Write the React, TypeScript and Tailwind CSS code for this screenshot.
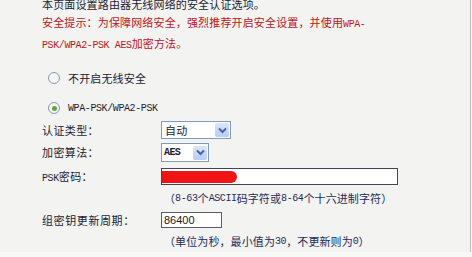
import React from "react";

const cjk = '"Noto Sans CJK SC", "Noto Sans", sans-serif';
const mono = '"Liberation Mono", "Noto Sans CJK SC", monospace';

function M({ children }: { children: React.ReactNode }) {
  return (
    <span className="text-[10px] tracking-[-0.4px]" style={{ fontFamily: mono }}>
      {children}
    </span>
  );
}

function Chevron() {
  return (
    <div className="flex h-[14px] w-[14px] items-center justify-center rounded-[2px] bg-gradient-to-b from-[#dbe6fd] to-[#b7cbf6]">
      <svg width="9" height="7" viewBox="0 0 9 7">
        <path d="M1 1.5 L4.5 5 L8 1.5" fill="none" stroke="#4a64a0" strokeWidth="2" />
      </svg>
    </div>
  );
}

export default function App() {
  return (
    <div
      className="relative h-[257px] w-[472px] overflow-hidden bg-[#f8f8f6] text-[11px] text-[#1c1c34]"
      style={{ fontFamily: cjk }}
    >
      <div className="h-full w-[471px] border-r border-[#bdbdbd] bg-[#f3f3f1] pl-[42px]">
        <p className="mt-[-5px] leading-[18px] tracking-[0.15px]">
          本页面设置路由器无线网络的安全认证选项。
          <br />
          <span className="text-[#c0141c]">
            安全提示：为保障网络安全，强烈推荐开启安全设置，并使用<M>WPA-</M>
            <br />
            <M>PSK/WPA2-PSK AES</M>加密方法。
          </span>
        </p>

        <div className="mt-[13px] flex h-[20px] items-center gap-[8px] pl-[6px]">
          <div className="h-[12px] w-[12px] rounded-full border border-[#8a98a8] bg-[#f6f6f6]" />
          <span className="tracking-[0.15px]">不开启无线安全</span>
        </div>

        <div className="mt-[10px] flex h-[20px] items-center gap-[8px] pl-[6px]">
          <div className="flex h-[12px] w-[12px] items-center justify-center rounded-full border border-[#8a98a8] bg-[#f6f6f6]">
            <div className="h-[5px] w-[5px] rounded-full bg-[#58a83c]" />
          </div>
          <M>WPA-PSK/WPA2-PSK</M>
        </div>

        <div className="mt-[3px] flex h-[18px] items-center">
          <span className="w-[119px] tracking-[0.4px]">认证类型：</span>
          <div className="flex h-[18px] w-[70px] items-center justify-between border border-[#7f9db9] bg-white pl-[3px] pr-[1px]">
            <span className="tracking-[0.3px]">自动</span>
            <Chevron />
          </div>
        </div>

        <div className="mt-[4px] flex h-[19px] items-center">
          <span className="w-[119px] tracking-[0.4px]">加密算法：</span>
          <div className="flex h-[19px] w-[48px] items-center justify-between border border-[#7f9db9] bg-white pl-[2px] pr-[1px]">
            <span className="text-[10px] font-bold tracking-[-0.6px]" style={{ fontFamily: mono }}>
              AES
            </span>
            <Chevron />
          </div>
        </div>

        <div className="mt-[6px] flex h-[17px] items-center">
          <span className="w-[119px]">
            <M>PSK</M>
            <span className="tracking-[0.4px]">密码：</span>
          </span>
          <div className="relative h-[17px] w-[237px] border border-[#3c4658] bg-white">
            <div className="absolute left-[0px] top-[2px] h-[12px] w-[75px] rounded-r-full rounded-l-[3px] bg-[#f01414]" />
          </div>
        </div>

        <div className="mt-[6px] flex h-[14px] items-center pl-[122px] text-[#1e2a5a] tracking-[0.1px]">
          （<M>8-63</M>个<M>ASCII</M>码字符或<M>8-64</M>个十六进制字符）
        </div>

        <div className="mt-[7px] flex h-[16px] items-center">
          <span className="w-[119px] tracking-[0.6px]">组密钥更新周期：</span>
          <div
            className="flex h-[16px] w-[61px] items-center border border-[#55606e] bg-white pl-[2px] text-[11px] text-[#1a1a1a]"
            style={{ fontFamily: '"Liberation Sans", sans-serif' }}
          >
            86400
          </div>
        </div>

        <div className="mt-[6px] flex h-[14px] items-center pl-[122px] text-[#1e2a5a] tracking-[0.1px]">
          （单位为秒，最小值为<M>30</M>，不更新则为<M>0</M>）
        </div>
      </div>
    </div>
  );
}
